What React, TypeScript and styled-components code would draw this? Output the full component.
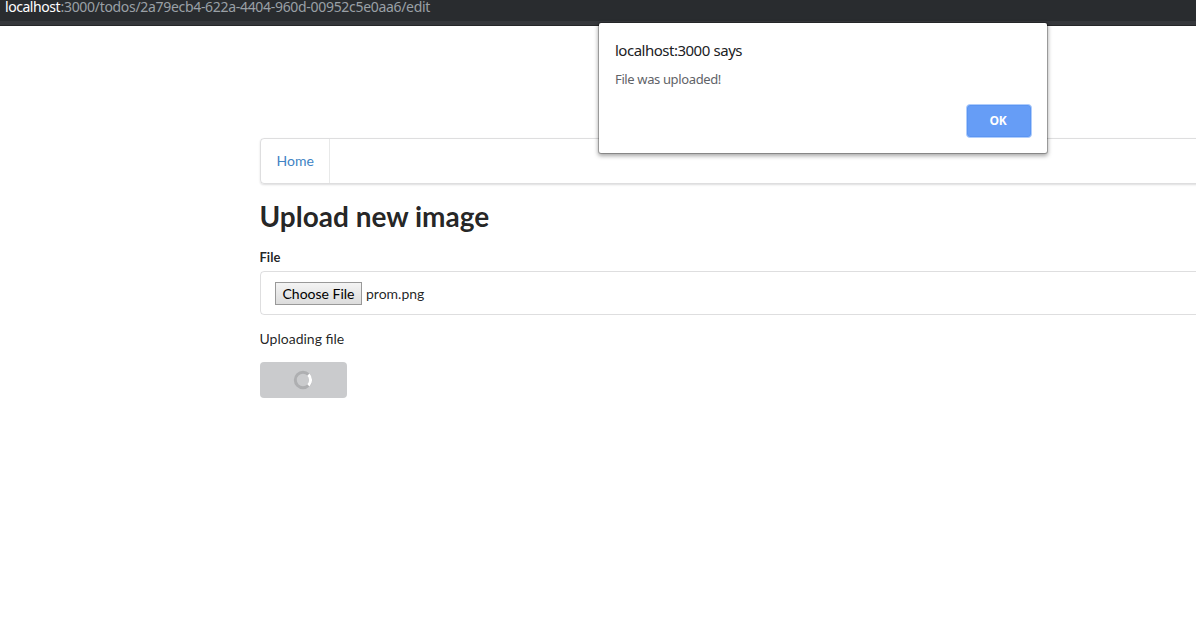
import React from 'react';
import styled, { createGlobalStyle } from 'styled-components';

const GlobalStyle = createGlobalStyle`
  *, *::before, *::after { box-sizing: border-box; }
  html, body { margin: 0; height: 100%; overflow: hidden; background: #fff; }
  body {
    font-family: Lato, 'Liberation Sans', sans-serif;
    font-size: 14px;
    line-height: 20px;
    color: rgba(0, 0, 0, 0.87);
  }
`;

const Window = styled.div`
  position: relative;
  height: 642px;
  overflow: hidden;
`;

const AddressBar = styled.header`
  height: 26px;
  padding: 0 0 0 5px;
  background: #292c2f;
  border-bottom: 1px solid #252628;
  box-shadow: inset 0 -4px #35373b;
  font-family: 'Noto Sans', 'Open Sans', sans-serif;
  font-size: 14px;
  line-height: 14px;
  white-space: nowrap;
  color: #9aa0a6;
`;

const Host = styled.span`
  display: inline-block;
  width: 55.5px;
  letter-spacing: -0.45px;
  color: #fff;
`;

const Path = styled.span`
  letter-spacing: -0.31px;
`;

const Container = styled.main`
  width: 1127px;
  margin: 112px 0 0 259.5px;
`;

const Menu = styled.nav`
  display: flex;
  height: 46px;
  border: 1px solid rgba(34, 36, 38, 0.15);
  border-radius: 4px;
  box-shadow: 0 1px 2px 0 rgba(34, 36, 38, 0.15);
`;

const MenuItem = styled.a`
  display: flex;
  align-items: center;
  width: 69px;
  padding-left: 16px;
  border-right: 1px solid rgba(34, 36, 38, 0.1);
  color: #4183c4;
`;

const Title = styled.h1`
  margin: 14px 0 0;
  font-size: 28px;
  line-height: 36px;
  font-weight: 700;
`;

const Label = styled.label`
  display: block;
  margin-top: 13px;
  font-size: 13px;
  line-height: 20px;
  font-weight: 700;
`;

const FileField = styled.div`
  display: flex;
  align-items: center;
  gap: 4.5px;
  height: 44px;
  margin-top: 4px;
  padding-left: 14px;
  border: 1px solid rgba(34, 36, 38, 0.15);
  border-radius: 4px;
`;

const ChooseButton = styled.button`
  width: 87px;
  height: 23px;
  padding: 0 0 0 1px;
  border: 1px solid #999;
  border-radius: 0;
  background: linear-gradient(#f4f4f4, #dcdcdc);
  font: inherit;
  line-height: 21px;
  color: #000;
`;

const FileName = styled.span`
  padding-top: 2px;
`;

const Status = styled.p`
  margin: 14px 0 0;
`;

const UploadButton = styled.button`
  display: flex;
  align-items: center;
  justify-content: center;
  width: 87px;
  height: 36px;
  margin-top: 13px;
  padding: 0;
  border: 0;
  border-radius: 4px;
  background: #cacbcd;
`;

const Dialog = styled.section`
  position: absolute;
  top: 23px;
  left: 599px;
  display: flex;
  flex-direction: column;
  width: 448px;
  height: 130px;
  padding: 16px 15px 15px 16px;
  border-radius: 2px;
  background: #fff;
  box-shadow: 0 0 0 1px rgba(0, 0, 0, 0.24), 0 2px 4px 1px rgba(0, 0, 0, 0.35);
  font-family: 'Noto Sans', 'Open Sans', sans-serif;
`;

const DialogTitle = styled.h2`
  margin: 0;
  font-size: 15px;
  line-height: 22px;
  font-weight: 400;
  letter-spacing: -0.5px;
  word-spacing: 0.5px;
  color: #202124;
`;

const DialogText = styled.p`
  margin: 9px 0 0;
  font-size: 13px;
  line-height: 18px;
  letter-spacing: -0.37px;
  color: #5f6368;
`;

const OkButton = styled.button`
  align-self: flex-end;
  width: 66px;
  height: 34px;
  margin-top: auto;
  padding: 0 2px 1px 0;
  border: 1px solid #b0cdfb;
  border-radius: 4px;
  background: #669df6;
  box-shadow: inset 0 0 0 1px #5b95f2;
  font: 700 12px/20px 'Open Sans', 'Noto Sans', sans-serif;
  letter-spacing: -0.3px;
  color: #fff;
`;

const Spinner = () => (
  <svg width="20" height="20" viewBox="0 0 20 20" fill="none" strokeWidth="3">
    <circle cx="10" cy="10" r="7.7" stroke="#aeafb1" />
    <path d="M15.4 4.6A7.7 7.7 0 0 1 15.4 15.4" stroke="#fff" />
  </svg>
);

export default function App() {
  return (
    <Window>
      <GlobalStyle />
      <AddressBar>
        <Host>localhost</Host>
        <Path>:3000/todos/2a79ecb4-622a-4404-960d-00952c5e0aa6/edit</Path>
      </AddressBar>
      <Container>
        <Menu>
          <MenuItem>Home</MenuItem>
        </Menu>
        <Title>Upload new image</Title>
        <Label>File</Label>
        <FileField>
          <ChooseButton>Choose File</ChooseButton>
          <FileName>prom.png</FileName>
        </FileField>
        <Status>Uploading file</Status>
        <UploadButton aria-label="Uploading">
          <Spinner />
        </UploadButton>
      </Container>
      <Dialog role="dialog">
        <DialogTitle>localhost:3000 says</DialogTitle>
        <DialogText>File was uploaded!</DialogText>
        <OkButton>OK</OkButton>
      </Dialog>
    </Window>
  );
}
